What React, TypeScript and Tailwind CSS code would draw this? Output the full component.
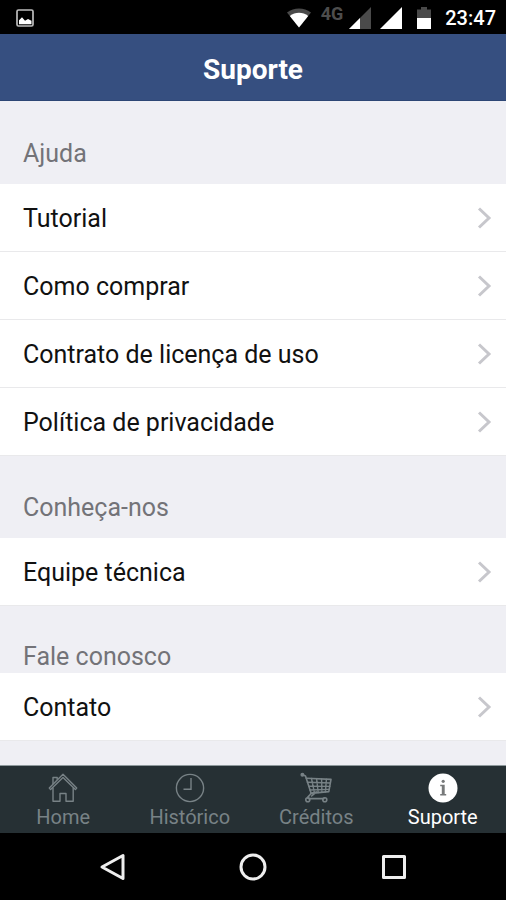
import React from 'react';

interface Section {
  title: string;
  headerClass: string;
  items: string[];
}

const sections: Section[] = [
  {
    title: 'Ajuda',
    headerClass: 'h-[83px] pb-[14px]',
    items: ['Tutorial', 'Como comprar', 'Contrato de licença de uso', 'Política de privacidade'],
  },
  {
    title: 'Conheça-nos',
    headerClass: 'h-[82px] pb-[14px]',
    items: ['Equipe técnica'],
  },
  {
    title: 'Fale conosco',
    headerClass: 'h-[67px]',
    items: ['Contato'],
  },
];

const HomeIcon = () => (
  <svg className="size-8" viewBox="0 0 32 32" fill="none" stroke="currentColor" strokeWidth="1.4" strokeLinejoin="round" aria-hidden="true">
    <path d="M2.3 16 16 2.3 29.7 16l-1.3 1.5L16 5.4 3.6 17.5z" />
    <path d="M6 15.4v13.8h7v-7.7h6v7.7h7.2V15.4" />
    <path d="M6 12V5.5h4.2v2.3" />
  </svg>
);

const ClockIcon = () => (
  <svg className="size-8" viewBox="0 0 32 32" fill="none" stroke="currentColor" strokeWidth="1.4" aria-hidden="true">
    <circle cx="16" cy="16" r="13.6" />
    <path d="M17 6v11.2H9.5" />
  </svg>
);

const CartIcon = () => (
  <svg className="size-8" viewBox="0 0 32 32" fill="none" stroke="currentColor" strokeWidth="1.6" strokeLinecap="round" strokeLinejoin="round" aria-hidden="true">
    <path d="M2 2.6 5.5 4l5.7 17.5-3.4 3.6c-.5.8 0 1.5.9 1.5H24" />
    <path d="M6.3 6.2 31 7.4l-2.2 12.2-18.2 1.8 6-1.4-5 4" />
    <path d="M7.4 10.3 30.4 11M8.8 14.2l21 .2M9.9 18l19.2-.6M11.5 6.5l2.9 14.2M16.6 6.7l1.6 13.8M21.6 7l.3 13.2M26.4 7.2l-1 12.7" strokeWidth="1.4" />
    <circle cx="7.8" cy="27.8" r="2" />
    <circle cx="24.8" cy="27.8" r="2" />
    <circle cx="2.4" cy="2.8" r="1.2" fill="currentColor" />
  </svg>
);

const InfoIcon = () => (
  <svg className="size-8" viewBox="0 0 32 32" aria-hidden="true">
    <circle cx="16" cy="16" r="14.5" fill="#fff" />
    <g fill="#77797a">
      <circle cx="16.2" cy="9.3" r="1.6" />
      <path d="M13.2 12.7h4.5v9.4h1.5v1.5h-6v-1.5h1.6v-7.9h-1.6z" />
    </g>
  </svg>
);

const tabs = [
  { label: 'Home', icon: <HomeIcon />, active: false },
  { label: 'Histórico', icon: <ClockIcon />, active: false },
  { label: 'Créditos', icon: <CartIcon />, active: false },
  { label: 'Suporte', icon: <InfoIcon />, active: true },
];

const StatusBar: React.FC = () => (
  <div className="flex h-[34px] items-center bg-black pl-4 pr-[10px] pt-px text-white">
    <svg className="h-[18px] w-[18px]" viewBox="0 0 18 18" aria-hidden="true">
      <rect x="1" y="1" width="16" height="16" rx="1.5" fill="none" stroke="#bdbdbd" strokeWidth="1.7" />
      <path d="M3 15.3v-4l3-3 3 3.4 3-1.7 3.5 1.8v3.5z" fill="#fff" />
    </svg>
    <div className="ml-auto flex items-center">
      <svg className="h-5 w-6" viewBox="0 0 24 20" aria-hidden="true">
        <path d="M0 4.5C7 -.9 17-.9 24 4.5L12 19.5z" fill="#4a4a4a" />
        <path d="M2.8 8c5.4-4.4 13-4.4 18.4 0L12 19.5z" fill="#fff" />
      </svg>
      <span className="ml-[10px] pb-2 text-lg leading-5 font-bold text-[#4d4d4d]">4G</span>
      <svg className="ml-[6px] size-[22px]" viewBox="0 0 22 22" aria-hidden="true">
        <path d="M22 0v22H0z" fill="#4a4a4a" />
        <path d="M11 11v11H0z" fill="#fff" />
      </svg>
      <svg className="ml-[9px] size-[22px]" viewBox="0 0 22 22" aria-hidden="true">
        <path d="M22 0v22H0z" fill="#fff" />
      </svg>
      <svg className="ml-[15px] h-[22px] w-[14px]" viewBox="0 0 14 22" aria-hidden="true">
        <path d="M0 2.5h4V0h6v2.5h4V11H0z" fill="#4a4a4a" />
        <path d="M0 11h14v11H0z" fill="#fff" />
      </svg>
      <span className="ml-[14px] text-xl leading-5 font-medium">23:47</span>
    </div>
  </div>
);

const ListItem: React.FC<{ label: string }> = ({ label }) => (
  <li>
    <button type="button" className="flex h-[68px] w-full items-center justify-between border-b border-[#e9e9eb] bg-white pl-[23px] pr-[14px] text-left text-[25px] leading-8 text-[#111]">
      <span className="pt-[2px]">{label}</span>
      <svg className="h-6 w-4" viewBox="0 0 16 24" fill="none" stroke="#c7c7cc" strokeWidth="3" aria-hidden="true">
        <path d="M3 2.5 13 12 3 21.5" />
      </svg>
    </button>
  </li>
);

const App: React.FC = () => {
  return (
    <div className="flex min-h-screen flex-col bg-[#efeff4] font-['Roboto',sans-serif]">
      <StatusBar />

      <header className="flex h-[67px] items-center justify-center border-b border-[#2d4675] bg-[#364f80] pt-[5px]">
        <h1 className="text-[28px] leading-8 font-bold text-white">Suporte</h1>
      </header>

      <main className="flex-1">
        {sections.map((section) => (
          <section key={section.title}>
            <h2 className={`flex items-end px-[23px] text-[25px] leading-8 text-[#737378] ${section.headerClass}`}>
              {section.title}
            </h2>
            <ul>
              {section.items.map((item) => (
                <ListItem key={item} label={item} />
              ))}
            </ul>
          </section>
        ))}
      </main>

      {/* Tab bar */}
      <nav className="flex h-[68px] border-t border-[#8e999c] bg-[#263034]">
        {tabs.map((tab) => (
          <a
            key={tab.label}
            href="#"
            className={`flex flex-1 flex-col items-center pt-[6px] text-xl leading-[26px] ${tab.active ? 'text-white' : 'text-[#788286]'}`}
          >
            {tab.icon}
            {tab.label}
          </a>
        ))}
      </nav>

      {/* Android navigation */}
      <div className="flex h-[67px] items-center bg-black px-[42px]">
        <button type="button" aria-label="Voltar" className="flex flex-1 justify-center">
          <svg className="size-7" viewBox="0 0 28 28" fill="none" stroke="#eee" strokeWidth="3" strokeLinejoin="round" aria-hidden="true">
            <path d="M25 2.5v23L4 14z" />
          </svg>
        </button>
        <button type="button" aria-label="Início" className="flex flex-1 justify-center">
          <svg className="size-7" viewBox="0 0 28 28" fill="none" stroke="#eee" strokeWidth="3" aria-hidden="true">
            <circle cx="14" cy="14" r="12" />
          </svg>
        </button>
        <button type="button" aria-label="Recentes" className="flex flex-1 justify-center">
          <svg className="size-7" viewBox="0 0 28 28" fill="none" stroke="#eee" strokeWidth="3" strokeLinejoin="round" aria-hidden="true">
            <rect x="3.5" y="3.5" width="21" height="21" />
          </svg>
        </button>
      </div>
    </div>
  );
};

export default App;
